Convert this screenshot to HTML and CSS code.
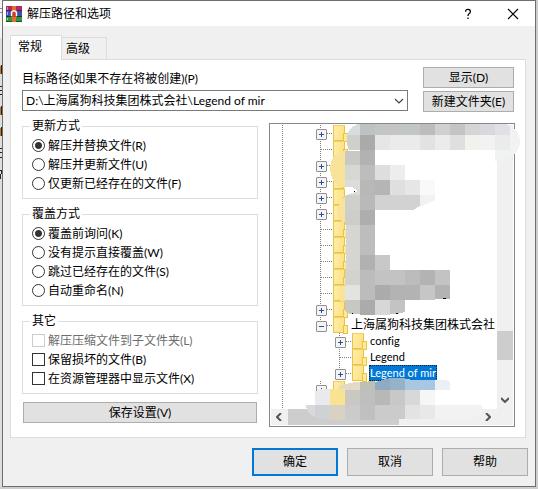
FILE: index.html
```html
<!DOCTYPE html>
<html lang="zh-CN">
<head>
    <meta charset="UTF-8">
    <meta name="viewport" content="width=device-width, initial-scale=1.0">
    <title>解压路径和选项</title>
    <link rel="stylesheet" href="styles.css">
</head>
<body>
    <!-- Sliver of the window behind the dialog -->
    <div class="backdrop" aria-hidden="true">
        <svg viewBox="0 0 2 200" shape-rendering="crispEdges">
            <rect width="2" height="38" fill="#f4f4f4"/>
            <path fill="#8a8a8a" d="M0 8H2V9H0ZM0 12H2V13H0Z"/>
            <path fill="#c07a20" d="M0 66H1V74H0ZM0 107H1V115H0ZM0 128H1V136H0Z"/>
            <path fill="#222" d="M1 65H2V74H1ZM1 106H2V115H1ZM1 127H2V136H1ZM0 86H2V87H0ZM0 90H2V91H0ZM0 94H2V95H0ZM0 148H2V149H0ZM0 152H2V153H0ZM0 157H2V158H0ZM0 170H2V171H0ZM1 171H2V174H1ZM0 174H1V179H0Z"/>
        </svg>
    </div>

    <div class="dialog" role="dialog" aria-labelledby="dialogTitle">
        <header class="title-bar">
            <svg class="app-icon" viewBox="0 0 16 16">
                <rect x="0" y="0" width="16" height="5" fill="#b02a62"/>
                <rect x="0" y="5" width="16" height="6" fill="#3f4fb0"/>
                <rect x="0" y="11" width="16" height="5" fill="#2f9a3a"/>
                <rect x="0" y="4" width="16" height="1" fill="#6b1548"/>
                <rect x="0" y="10" width="16" height="1" fill="#1e2a66"/>
                <rect x="0" y="15" width="16" height="1" fill="#17551f"/>
                <rect x="1" y="1" width="1" height="3" fill="#e07fb0"/>
                <rect x="1" y="6" width="1" height="3" fill="#9fb0ee"/>
                <rect x="1" y="12" width="1" height="2" fill="#8fdc8f"/>
                <rect x="6" y="0" width="4" height="16" fill="#e0702c"/>
                <rect x="5" y="4" width="6" height="7" fill="#d0442a"/>
                <path d="M5.5 10V6.5Q8 3 10.5 6.5V10" fill="none" stroke="#fff" stroke-width="1.4"/>
                <rect x="7" y="6" width="2" height="5" fill="#c9402a"/>
            </svg>
            <h1 id="dialogTitle">解压路径和选项</h1>
            <button class="title-button" aria-label="帮助主题">
                <svg viewBox="0 0 12 12"><path d="M3.6 3.7Q3.6 1.3 6 1.3T8.4 3.5Q8.4 4.8 7 5.8Q6 6.6 6 8M6 9.6V11" fill="none" stroke="#000" stroke-width="1.3"/></svg>
            </button>
            <button class="title-button" aria-label="关闭">
                <svg viewBox="0 0 12 12"><path d="M1 1L11 11M11 1L1 11" stroke="#000" stroke-width="1.1"/></svg>
            </button>
        </header>

        <div class="tabs" role="tablist">
            <button class="tab active" role="tab" aria-selected="true">常规</button>
            <button class="tab" role="tab" aria-selected="false">高级</button>
        </div>

        <main class="panel">
            <div class="path-row">
                <div class="path-field">
                    <label for="path">目标路径(如果不存在将被创建)(P)</label>
                    <div class="combo">
                        <select id="path">
                            <option>D:\上海属狗科技集团株式会社\Legend of mir</option>
                        </select>
                        <svg class="combo-arrow" viewBox="0 0 10 6"><path d="M1 1L5 5L9 1" fill="none" stroke="#444" stroke-width="1.2"/></svg>
                    </div>
                </div>
                <div class="path-buttons">
                    <button class="button">显示(D)</button>
                    <button class="button">新建文件夹(E)</button>
                </div>
            </div>

            <div class="columns">
                <div class="options">
                    <fieldset>
                        <legend>更新方式</legend>
                        <label><input type="radio" name="update" checked>解压并替换文件(R)</label>
                        <label><input type="radio" name="update">解压并更新文件(U)</label>
                        <label><input type="radio" name="update">仅更新已经存在的文件(F)</label>
                    </fieldset>
                    <fieldset>
                        <legend>覆盖方式</legend>
                        <label><input type="radio" name="overwrite" checked>覆盖前询问(K)</label>
                        <label><input type="radio" name="overwrite">没有提示直接覆盖(W)</label>
                        <label><input type="radio" name="overwrite">跳过已经存在的文件(S)</label>
                        <label><input type="radio" name="overwrite">自动重命名(N)</label>
                    </fieldset>
                    <fieldset>
                        <legend>其它</legend>
                        <label class="disabled"><input type="checkbox" disabled>解压压缩文件到子文件夹(L)</label>
                        <label><input type="checkbox">保留损坏的文件(B)</label>
                        <label><input type="checkbox">在资源管理器中显示文件(X)</label>
                    </fieldset>
                    <button class="button save">保存设置(V)</button>
                </div>

                <div class="tree">
                    <div class="tree-body">
                        <ul class="tree-list" role="tree">
                            <li><i class="toggle plus"></i><i class="folder"></i></li>
                            <li><i class="toggle"></i><i class="folder"></i></li>
                            <li><i class="toggle plus"></i><i class="folder"></i></li>
                            <li><i class="toggle plus"></i><i class="folder"></i></li>
                            <li><i class="toggle plus"></i><i class="folder"></i></li>
                            <li><i class="toggle plus"></i><i class="folder"></i></li>
                            <li><i class="toggle"></i><i class="folder"></i></li>
                            <li><i class="toggle"></i><i class="folder"></i></li>
                            <li><i class="toggle"></i><i class="folder"></i></li>
                            <li><i class="toggle"></i><i class="folder"></i></li>
                            <li><i class="toggle"></i><i class="folder"></i></li>
                            <li><i class="toggle plus"></i><i class="folder"></i></li>
                            <li role="treeitem"><i class="toggle minus"></i><i class="folder"></i><span class="name root">上海属狗科技集团株式会社</span></li>
                            <li role="treeitem" class="child"><i class="toggle plus"></i><i class="folder"></i><span class="name">config</span></li>
                            <li role="treeitem" class="child"><i class="toggle"></i><i class="folder"></i><span class="name">Legend</span></li>
                            <li role="treeitem" class="child"><i class="toggle plus"></i><i class="folder"></i><span class="name selected">Legend of mir</span></li>
                            <li><i class="toggle plus"></i><i class="folder"></i></li>
                        </ul>
                        <div class="scroll-y">
                            <div class="thumb-y"></div>
                            <svg class="arrow-down" viewBox="0 0 8 6"><path d="M0 1L4 5L8 1" fill="none" stroke="#555" stroke-width="2"/></svg>
                        </div>
                    </div>
                    <div class="scroll-x">
                        <svg viewBox="0 0 6 8"><path d="M5 0L1 4L5 8" fill="none" stroke="#555" stroke-width="2"/></svg>
                        <div class="track-x"><div class="thumb-x"></div></div>
                        <svg viewBox="0 0 6 8"><path d="M1 0L5 4L1 8" fill="none" stroke="#555" stroke-width="2"/></svg>
                    </div>

                    <!-- Mosaic strokes that hide the private folder names -->
                    <svg class="mosaic" viewBox="269 123 256 304" shape-rendering="crispEdges" aria-hidden="true">
                        <path fill="#f9e39a" d="M345 151Q337 152 333 158Q330 163 330 169Q331 178 335 183L340 187H345Z"/>
                        <path fill="#f9e39a" d="M345 196Q338 203 337 211Q337 217 342 222H345Z"/>
                        <path fill="#f9e39a" d="M340 286H345V301H340Z"/>
                        <path fill="#d9dcdd" d="M347 135Q350 127 358 124H361V135Z"/>
                        <path fill="#bfc2c2" d="M360 124H375V135H360Z"/>
                        <path fill="#c4c6c6" d="M375 124H405V135H375Z"/>
                        <path fill="#c2c6c5" d="M405 124H420V135H405Z"/>
                        <path fill="#bcbcbc" d="M420 124H435V135H420Z"/>
                        <path fill="#d0d0d0" d="M435 124H450V135H435Z"/>
                        <path fill="#c4c4c4" d="M450 124H465V135H450Z"/>
                        <path fill="#d5d5d5" d="M465 124H480V135H465Z"/>
                        <path fill="#d8d9dc" d="M480 124H495V135H480Z"/>
                        <path fill="#dfe1e4" d="M495 124H506L510 126V135H495Z"/>
                        <path fill="#f1f3f3" d="M510 126Q520 131 520 142Q519 153 511 156L503 161H495V150H510Z"/>
                        <path fill="#cfcfcb" d="M347 135H360V150H349Q346 145 347 135Z"/>
                        <path fill="#aaaaaa" d="M360 135H375V150H360Z"/>
                        <path fill="#e6e6e6" d="M375 135H390V150H375Z"/>
                        <path fill="#ebebeb" d="M390 135H420V150H390ZM435 135H450V150H435ZM495 135H510V150H495Z"/>
                        <path fill="#e2e2e2" d="M420 135H435V150H420Z"/>
                        <path fill="#dfdfdf" d="M450 135H465V150H450Z"/>
                        <path fill="#f1f1ee" d="M465 135H480V150H465Z"/>
                        <path fill="#f2f2f2" d="M480 135H495V150H480Z"/>
                        <path fill="#c8c8c6" d="M345 151H360V165H345Z"/>
                        <path fill="#b2b2b2" d="M360 150H375V165H360Z"/>
                        <path fill="#d7d7d4" d="M345 165H360V180H345Z"/>
                        <path fill="#bdbdbd" d="M360 165H375V180H360Z"/>
                        <path fill="#dedede" d="M375 165H390V180H375Z"/>
                        <path fill="#ededed" d="M390 165H405V180H390Z"/>
                        <path fill="#dcdcda" d="M345 180H360V195H345Z"/>
                        <path fill="#b8b8b8" d="M360 180H375V195H360Z"/>
                        <path fill="#b5b5b5" d="M375 180H390V195H375Z"/>
                        <path fill="#dfdfdf" d="M390 180H405V195H390Z"/>
                        <path fill="#e6e6e6" d="M405 180H420V195H405Z"/>
                        <path fill="#f9f9f9" d="M420 180H435V195H420Z"/>
                        <path fill="#cfcfcc" d="M345 195H360V210H345Z"/>
                        <path fill="#b9b9b9" d="M360 195H375V210H360Z"/>
                        <path fill="#d2d2d2" d="M375 195H420V206L413 210H375Z"/>
                        <path fill="#f2f2f2" d="M420 195H435V200L420 207Z"/>
                        <path fill="#cdcdca" d="M345 210H360V225H345Z"/>
                        <path fill="#aeaeae" d="M360 210H375V225H360Z"/>
                        <path fill="#d5d5d2" d="M346 225H360V270H346Z"/>
                        <path fill="#bdbdbd" d="M360 225H375V255H360Z"/>
                        <path fill="#b1b1b1" d="M360 255H375V270H360Z"/>
                        <path fill="#c8c8c8" d="M375 255H390V270H375Z"/>
                        <path fill="#d3d3ce" d="M345 270H360V285H345Z"/>
                        <path fill="#bcbcbc" d="M360 270H375V300H360ZM405 270H420V285H405Z"/>
                        <path fill="#c3c3c3" d="M375 270H405V285H375ZM435 270H450V285H435Z"/>
                        <path fill="#b3b3b3" d="M420 270H435V285H420Z"/>
                        <path fill="#e3e3e0" d="M345 285H360V300H345Z"/>
                        <path fill="#ababab" d="M375 285H390V300H375Z"/>
                        <path fill="#b3b3b3" d="M390 285H420V300H390ZM435 285H450V299H435Z"/>
                        <path fill="#c6c6c6" d="M420 285H435V300H420Z"/>
                        <path fill="#c7c7c3" d="M345 300H360V314H350L345 311Z"/>
                        <path fill="#ababab" d="M360 300H375V315H360Z"/>
                        <path fill="#d7d7d7" d="M375 300H390V315H375Z"/>
                        <path fill="#c3c3c3" d="M390 300H405V312L397 314H390Z"/>
                        <path fill="#fff" d="M345 187L352 187L358 191L352 193L345 196Z"/>
                        <path fill="#000" d="M354 191H355V192H354ZM443 298H446V299H442ZM352 313H353V314H352ZM396 313H398V314H396Z"/>
                        <!-- lower stroke -->
                        <path fill="#e2dac6" d="M340 386Q349 382 360 382V391H338Z"/>
                        <path fill="#bfbfb5" d="M360 382L375 381V390H360Z"/>
                        <path fill="#8fabc1" d="M375 382L390 378V390H375Z"/>
                        <path fill="#96b2c9" d="M390 378H405V390H390Z"/>
                        <path fill="#aac7e2" d="M405 379L415 380H435V390H405Z"/>
                        <path fill="#ecf0f4" d="M435 380Q446 379 450 382V390H435Z"/>
                        <path fill="#e9eaed" d="M315 391L322 389H330V405H315Z"/>
                        <path fill="#f9e392" d="M330 389L338 389H345V405H330Z"/>
                        <path fill="#c9c8c3" d="M345 390H360V405H345Z"/>
                        <path fill="#bfbfbf" d="M360 390H375V405H360Z"/>
                        <path fill="#b8b8b8" d="M375 390H390V405H375Z"/>
                        <path fill="#c8c8c8" d="M390 390H405V405H390Z"/>
                        <path fill="#d8d8d8" d="M405 390H420V405H405Z"/>
                        <path fill="#f6f6f6" d="M420 390H435V405H420Z"/>
                        <path fill="#d9d9d9" d="M306 405H315V417Q309 415 306 407Z"/>
                        <path fill="#cfd1d5" d="M315 405H330V419H320L315 417Z"/>
                        <path fill="#d9d2c3" d="M330 405H345V420H330Z"/>
                        <path fill="#cbcbcb" d="M345 405H360V419H345ZM375 405H405V419H375Z"/>
                        <path fill="#c0c0c0" d="M360 405H375V420H360Z"/>
                        <path fill="#e3e3e3" d="M405 405H420V419H405Z"/>
                        <path fill="#e8e8e8" d="M420 405H435V419H420Z"/>
                        <path fill="#f2f2f2" d="M435 405H482V411Q480 417 470 419H435Z"/>
                    </svg>
                </div>
            </div>
        </main>

        <footer class="actions">
            <button class="button default">确定</button>
            <button class="button">取消</button>
            <button class="button">帮助</button>
        </footer>
    </div>
</body>
</html>
```
FILE: styles.css
```css
* {
    margin: 0;
    padding: 0;
    box-sizing: border-box;
}

body {
    display: flex;
    min-height: 100vh;
    padding: 0 2px 2px 0;
    background-color: #cdcdcd;
    color: #000;
    font-family: Lato, "Noto Sans CJK SC", sans-serif;
    font-size: 12px;
    line-height: 18px;
    font-variant-ligatures: none;
}

button, select {
    font: inherit;
    color: inherit;
}

/* Window behind */
.backdrop {
    width: 2px;
    background-color: #dedede;
}

.backdrop svg {
    display: block;
    width: 2px;
    height: 200px;
}

/* Dialog */
.dialog {
    flex: 1;
    min-width: 0;
    border: 1px solid #6e6e6e;
    background-color: #f0f0f0;
}

.title-bar {
    display: flex;
    align-items: center;
    height: 25px;
    padding: 0 10px 0 3px;
    background-color: #fff;
}

.app-icon {
    width: 16px;
    height: 16px;
    margin-right: 5px;
}

.title-bar h1 {
    flex: 1;
    font-size: 12px;
    font-weight: normal;
}

.title-button {
    width: 25px;
    height: 24px;
    margin-left: 20px;
    border: none;
    background: none;
}

.title-button svg {
    display: block;
    width: 12px;
    height: 12px;
    margin: 0 auto;
}

/* Tabs */
.tabs {
    display: flex;
    align-items: flex-end;
    padding: 9px 7px 0;
}

.tab {
    width: 45px;
    height: 22px;
    padding-right: 12px;
    border: 1px solid #dcdcdc;
    border-left: none;
    border-bottom: none;
    background-color: #f0f0f0;
}

.tab.active {
    width: 52px;
    height: 25px;
    margin-bottom: -1px;
    padding: 0 12px 3px 0;
    border-left: 1px solid #dcdcdc;
    background-color: #fff;
    z-index: 1;
}

.panel {
    margin: 0 9px 0 7px;
    padding: 7px 10px 10px 11px;
    border: 1px solid #dcdcdc;
    background-color: #fff;
}

/* Path row */
.path-row {
    display: flex;
    gap: 15px;
    padding-right: 1px;
}

.path-field {
    flex: 1;
    display: flex;
    flex-direction: column;
    gap: 2px;
    padding-top: 3px;
}

.combo {
    position: relative;
}

.combo select {
    display: block;
    width: 100%;
    height: 21px;
    padding: 0 20px 0 3px;
    border: 1px solid #7a7a7a;
    background-color: #fff;
    appearance: none;
}

.combo-arrow {
    position: absolute;
    top: 8px;
    right: 4px;
    width: 10px;
    height: 6px;
    pointer-events: none;
}

.path-buttons {
    display: flex;
    flex-direction: column;
    gap: 3px;
    width: 91px;
}

.button {
    height: 21px;
    border: 1px solid #adadad;
    background-color: #e1e1e1;
    line-height: 18px;
}

/* Columns */
.columns {
    display: grid;
    grid-template-columns: 236fr 246fr;
    gap: 11px;
    padding-top: 5px;
}

.options {
    display: flex;
    flex-direction: column;
    gap: 6px;
}

fieldset {
    min-width: 0;
    padding: 1px 9px 5px;
    border: 1px solid #dcdcdc;
}

legend {
    margin-left: -2px;
    padding: 0 2px;
}

fieldset label {
    display: flex;
    align-items: center;
    gap: 3px;
    height: 19px;
    white-space: nowrap;
}

fieldset .disabled {
    color: #6d6d6d;
}

input[type="radio"],
input[type="checkbox"] {
    width: 13px;
    height: 13px;
    border: 1px solid #333;
    background-color: #fff;
    appearance: none;
}

input[type="radio"] {
    border-radius: 50%;
}

input[type="radio"]:checked {
    background-image: radial-gradient(circle, #333 3px, transparent 4px);
}

input:disabled {
    border-color: #ccc;
}

.save {
    margin: 2px 1px 0;
}

/* Folder tree */
.tree {
    position: relative;
    display: flex;
    flex-direction: column;
    height: 304px;
    margin-top: 6px;
    padding: 1px;
    border: 1px solid #828790;
}

.tree-body {
    flex: 1;
    display: flex;
    min-height: 0;
}

.tree-list {
    flex: 1;
    min-width: 0;
    overflow: hidden;
    list-style: none;
    background: repeating-linear-gradient(#808080 0 1px, transparent 1px 2px) 11px 0 / 1px 100% no-repeat;
}

.tree-list li {
    display: flex;
    align-items: center;
    height: 16px;
    padding-left: 45px;
    background: repeating-linear-gradient(#808080 0 1px, transparent 1px 2px) 49px 0 / 1px 100% no-repeat;
}

.tree-list .child {
    padding-left: 64px;
    background-position: 68px 0;
}

.toggle {
    width: 17px;
    height: 9px;
    background: repeating-linear-gradient(90deg, #808080 0 1px, transparent 1px 2px) 5px 4px / 12px 1px no-repeat;
}

.plus::before,
.minus::before {
    content: "";
    display: block;
    width: 9px;
    height: 9px;
    border: 1px solid #919191;
    border-radius: 1px;
    background:
        linear-gradient(#2b4d9b, #2b4d9b) center / 5px 1px no-repeat,
        linear-gradient(#2b4d9b, #2b4d9b) center / 1px 5px no-repeat,
        #f4f4f4;
}

.minus::before {
    background:
        linear-gradient(#2b4d9b, #2b4d9b) center / 5px 1px no-repeat,
        #f4f4f4;
}

.folder {
    width: 12px;
    height: 16px;
    border: 1px solid #e8c346;
    border-top-color: #f0d060;
    background: linear-gradient(100deg, #ffeeaa, #fcdf80);
}

.folder::after {
    content: "";
    display: block;
    width: 3px;
    height: 7px;
    margin: 7px 0 0 9px;
    border: 1px solid #e8c346;
    background-color: #fde996;
}

.name {
    height: 16px;
    margin-left: 5px;
    padding: 0 1px;
    font-size: 11px;
    line-height: 15px;
    white-space: nowrap;
}

.root {
    font-size: 12px;
}

.selected {
    background-color: #0078d7;
    color: #fff;
    outline: 1px dotted #222;
    outline-offset: -1px;
}

.scroll-y {
    display: flex;
    flex-direction: column;
    align-items: center;
    justify-content: space-between;
    width: 16px;
    padding: 206px 0 6px;
    background-color: #f0f0f0;
}

.thumb-y {
    width: 100%;
    height: 29px;
    background-color: #cdcdcd;
}

.arrow-down {
    width: 8px;
    height: 6px;
}

.scroll-x {
    display: flex;
    align-items: center;
    gap: 6px;
    height: 16px;
    padding: 0 22px 0 5px;
    background-color: #f0f0f0;
}

.scroll-x svg {
    width: 6px;
    height: 8px;
}

.track-x {
    flex: 1;
    height: 16px;
}

.thumb-x {
    width: 58%;
    height: 100%;
    background-color: #cdcdcd;
}

.mosaic {
    position: absolute;
    top: -1px;
    left: -1px;
    width: 256px;
    height: 304px;
    pointer-events: none;
}

/* Dialog buttons */
.actions {
    display: flex;
    justify-content: flex-end;
    gap: 9px;
    padding: 10px 7px 9px;
}

.actions .button {
    width: 86px;
    height: 28px;
}

.actions .default {
    border: 2px solid #0078d7;
}
```
